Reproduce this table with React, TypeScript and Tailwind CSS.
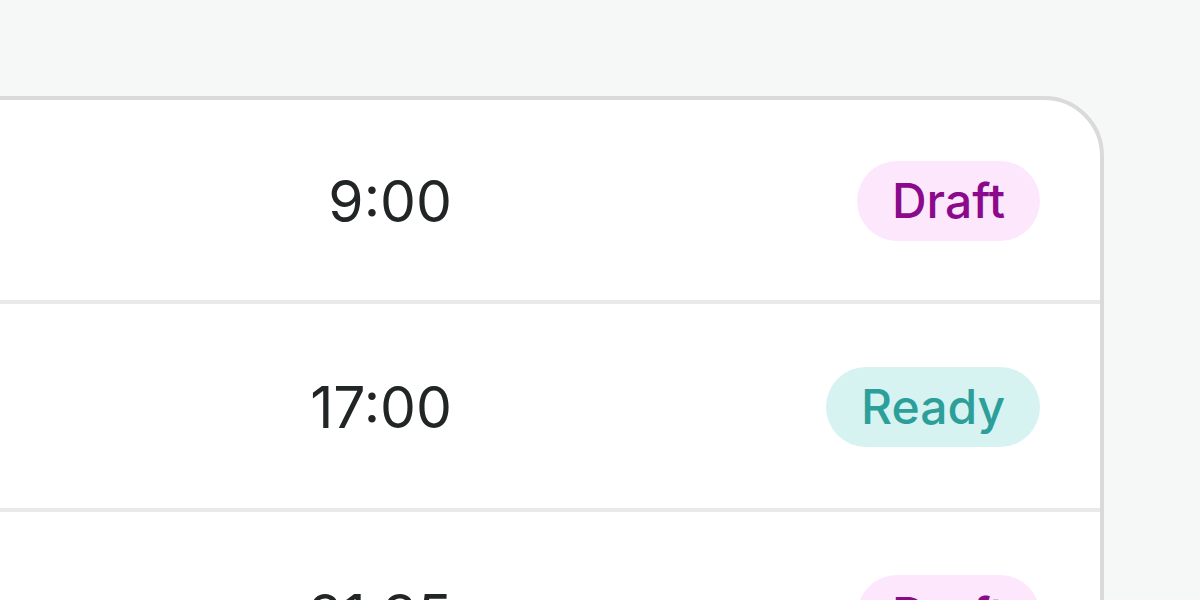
const ROWS = [
  { time: '9:00', status: 'Draft' },
  { time: '17:00', status: 'Ready' },
  { time: '21:35', status: 'Draft' },
]

function Badge({ status }: { status: string }) {
  const tone =
    status === 'Ready'
      ? 'bg-[#d6f3f2] text-[#2d9f9b]'
      : 'bg-[#fde7fd] text-[#8b0a8b]'
  return (
    <span className={`inline-flex h-[80px] items-center rounded-full px-[35px] text-[48px] font-medium leading-none ${tone}`}>
      {status}
    </span>
  )
}

export default function App() {
  return (
    <div
      className="h-[600px] w-[1200px] overflow-hidden bg-[#f6f8f7] pt-[96px]"
      style={{ fontFamily: 'Inter, "Noto Sans", sans-serif' }}
    >
      <div className="ml-[-100px] w-[1204px] rounded-tr-[60px] border-[4px] border-[#d9dad9] bg-white">
        {ROWS.map((row, i) => (
          <div
            key={i}
            className={`flex items-center border-b-[4px] border-[#e8e9e8] pt-[2px] ${i === 0 ? 'h-[204px]' : 'h-[208px]'}`}
          >
            <div className="w-[548px] text-right text-[57px] leading-none text-[#222526]">{row.time}</div>
            <div className="flex flex-1 justify-end pr-[60px]">
              <Badge status={row.status} />
            </div>
          </div>
        ))}
      </div>
    </div>
  )
}
